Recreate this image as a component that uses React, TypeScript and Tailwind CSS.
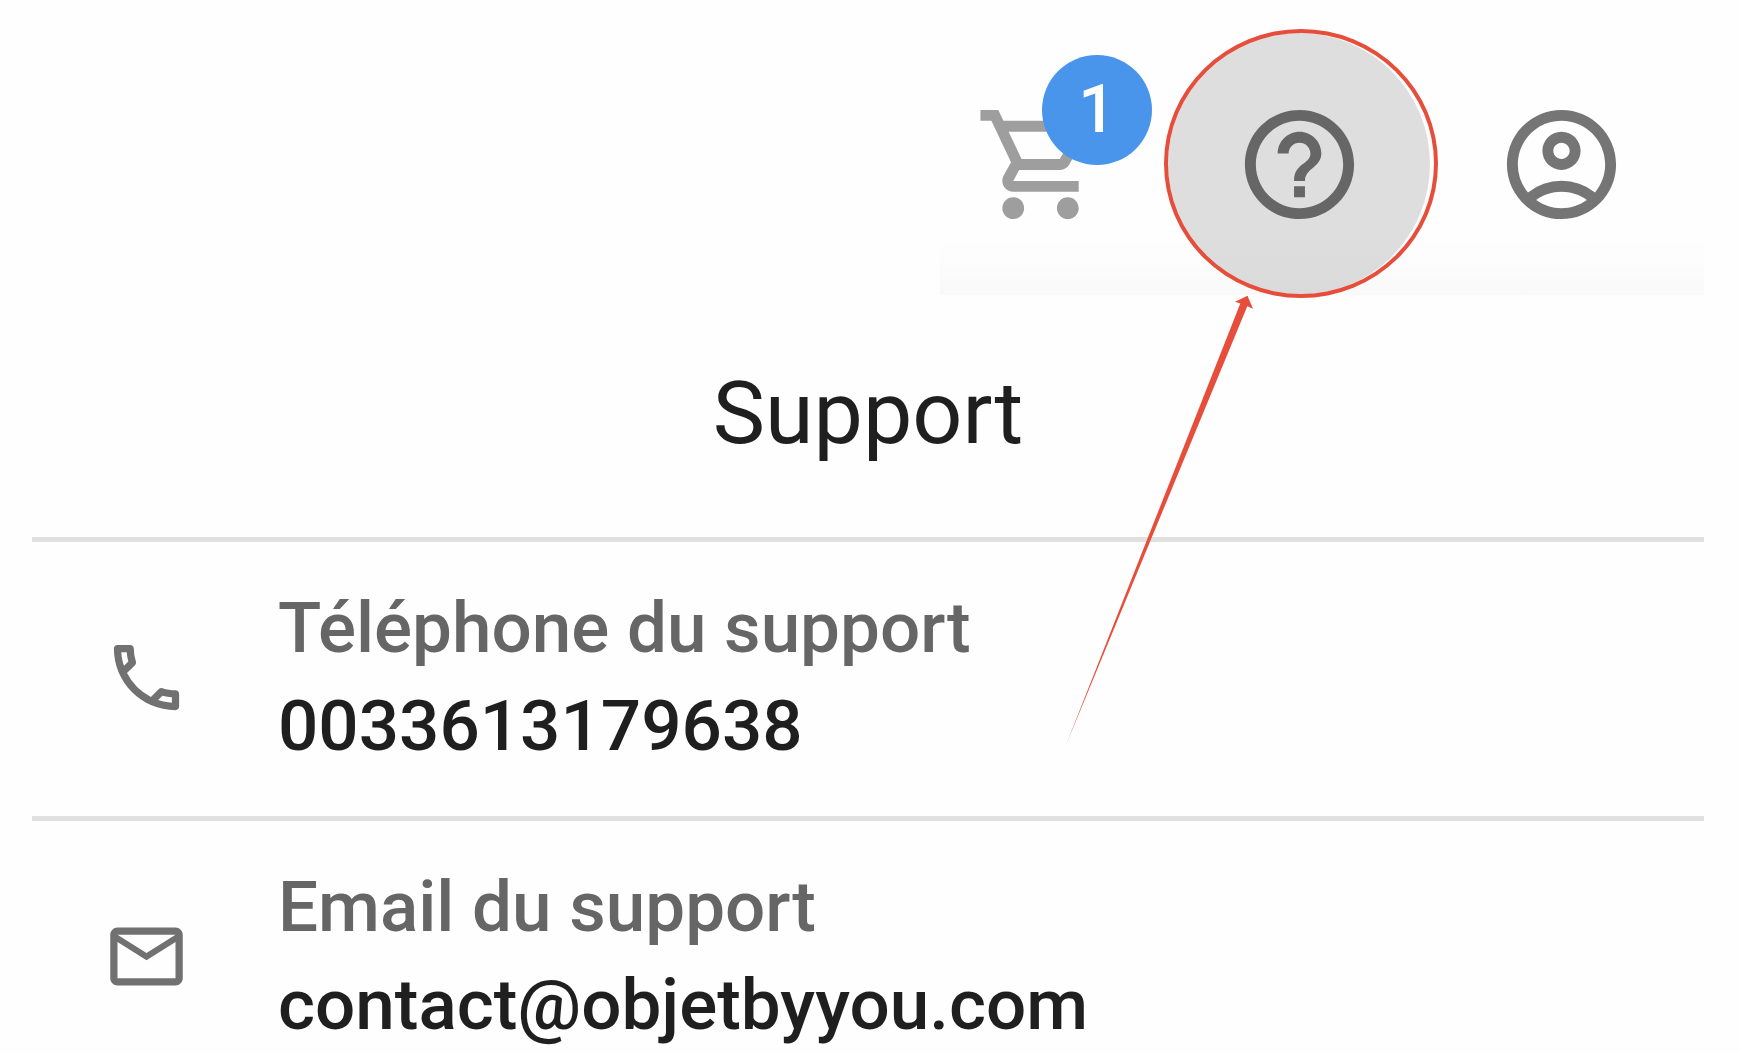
import { ReactNode } from "react";
import {
  MdHelpOutline,
  MdOutlineAccountCircle,
  MdOutlineEmail,
  MdOutlineLocalPhone,
  MdOutlineShoppingCart,
} from "react-icons/md";

type ContactRowProps = {
  icon: ReactNode;
  label: string;
  value: string;
  href: string;
};

function ContactRow({ icon, label, value, href }: ContactRowProps) {
  return (
    <li className="flex items-center border-t-5 border-[#e0e0e0] pt-[37px] pb-[41px] pl-[71px] last:pb-0">
      <span className="shrink-0 text-[#717171]">{icon}</span>
      <div className="ml-[88px] text-[71px] leading-[98px] font-medium whitespace-nowrap">
        <div className="text-[#666]">{label}</div>
        <a href={href} className="block text-[#1f1f1f]">
          {value}
        </a>
      </div>
    </li>
  );
}

// ring around the help button and the arrow that points to it
function HelpCallout() {
  return (
    <>
      <span className="pointer-events-none absolute -top-1 -right-2 -bottom-[3px] -left-1 rounded-[50%] border-4 border-[#e64e3b]" />
      <svg
        className="pointer-events-none absolute top-[257px] -left-[108px] h-[460px] w-[200px]"
        viewBox="0 0 200 460"
        fill="#e64e3b"
      >
        <path d="M187.5 5.7 L175 11.7 L180.3 13.4 L6 455 L187.3 16.3 L193 18.7 Z" />
      </svg>
    </>
  );
}

function Toolbar() {
  return (
    <header className="relative ml-auto flex w-[764px] justify-end pt-[33px] pr-3">
      <button
        aria-label="Panier"
        className="relative flex h-[262px] grow items-center justify-end pr-[62px] text-[#9e9e9e]"
      >
        <MdOutlineShoppingCart className="size-[131px]" />
        <span className="absolute top-[22px] right-4 flex size-[110px] items-center justify-center rounded-full bg-[#4a95ec] text-[66px] leading-none font-medium text-white">
          1
        </span>
      </button>
      <div className="relative z-10">
        <button
          aria-label="Support"
          className="flex size-[262px] items-center justify-center rounded-full bg-linear-to-b from-[#dedede] from-75% to-[#dadada] text-[#666]"
        >
          <MdHelpOutline className="size-[131px]" />
        </button>
        <HelpCallout />
      </div>
      <button
        aria-label="Mon compte"
        className="flex size-[262px] items-center justify-center text-[#757575]"
      >
        <MdOutlineAccountCircle className="size-[131px]" />
      </button>
      <div className="pointer-events-none absolute inset-x-0 bottom-0 h-[58px] bg-linear-to-b from-black/0 to-black/[0.02]" />
    </header>
  );
}

function App() {
  return (
    <div className="overflow-hidden bg-[#fefefe] pr-9 pl-8 font-['Roboto',sans-serif]">
      <Toolbar />
      <main>
        <h1 className="pt-[69px] pb-[75px] text-center text-[88px] leading-[98px] text-[#1f1f1f]">
          Support
        </h1>
        <ul>
          <ContactRow
            icon={<MdOutlineLocalPhone className="size-[87px]" />}
            label="Téléphone du support"
            value="0033613179638"
            href="tel:0033613179638"
          />
          <ContactRow
            icon={<MdOutlineEmail className="size-[87px]" />}
            label="Email du support"
            value="contact@objetbyyou.com"
            href="mailto:contact@objetbyyou.com"
          />
        </ul>
      </main>
    </div>
  );
}

export default App;
